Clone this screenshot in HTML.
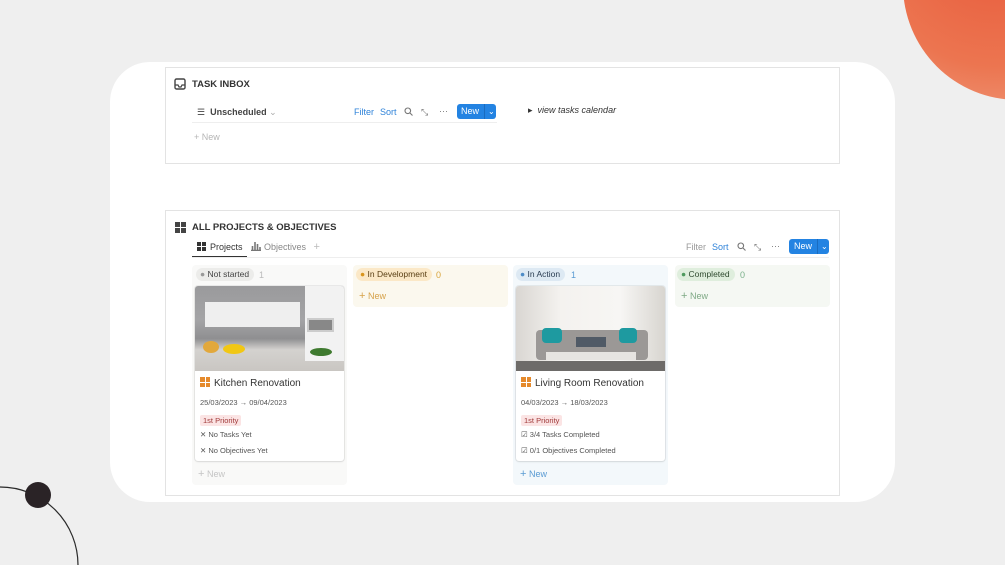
<!DOCTYPE html>
<html><head><meta charset="utf-8"><style>
*{box-sizing:border-box;margin:0;padding:0}
html,body{width:1005px;height:565px;overflow:hidden}
body{background:#efefef;position:relative;font-family:"Liberation Sans",sans-serif;color:#37352f}
.abs{position:absolute;line-height:12px;white-space:nowrap}
.panel{left:110px;top:62px;width:785px;height:440px;background:#fff;border-radius:40px}
.box{background:#fff;border:1px solid #e3e3e3}
.t{font-size:9px}
.blue{color:#2f83d9}
.btn{background:#2383e2;color:#fff;border-radius:3px;font-size:9px;height:15px;line-height:15px}
.col{border-radius:4px}
.tag{border-radius:7px;font-size:8.5px;height:13px;line-height:13px;padding:0 5px 0 4px}
.card{background:#fff;border-radius:3px;box-shadow:0 0 0 1px rgba(0,0,0,.06),0 1px 2px rgba(0,0,0,.08);overflow:hidden}
.small{font-size:7.5px;color:#555;line-height:10px}
.pr{background:#fbe4e4;color:#a03a3a;font-size:7.5px;padding:0 3px;line-height:11px;border-radius:2px;display:inline-block}
.g{display:inline-block;width:10px;height:10px;vertical-align:middle;margin-right:4px;position:relative;top:-1px;
background:linear-gradient(#fff,#fff) 4.5px 0/1px 10px no-repeat,linear-gradient(#fff,#fff) 0 4.5px/10px 1px no-repeat,#e58a2c}
</style></head><body>
<div class="abs" style="left:903px;top:-130px;width:230px;height:230px;border-radius:50%;background:radial-gradient(circle at 40% 30%,#e8583a,#ec7550 60%,#f0a285)"></div>
<svg style="position:absolute;left:0;top:480px" width="100" height="85"><circle cx="0" cy="85" r="78" fill="none" stroke="#2a2a2a" stroke-width="1.2"/><circle cx="38" cy="15" r="13" fill="#2a2326"/></svg>
<div class="abs panel"></div>

<div class="abs box" style="left:165px;top:67px;width:675px;height:97px"></div>
<svg style="position:absolute;left:174px;top:78px" width="12" height="12"><rect x="1" y="1" width="10" height="10" rx="1.5" fill="none" stroke="#444" stroke-width="1.4"/><path d="M1 7h3l1 2h2l1-2h3" fill="none" stroke="#444" stroke-width="1.2"/></svg>
<div class="abs" style="left:192px;top:79px;font-size:9.5px;font-weight:bold;color:#333">TASK INBOX</div>
<div class="abs t" style="left:197px;top:106px;color:#444">☰ &nbsp;<b>Unscheduled</b> <span style="color:#aaa">⌄</span></div>
<div class="abs t blue" style="left:354px;top:106px">Filter</div>
<div class="abs t blue" style="left:380px;top:106px">Sort</div>
<svg style="position:absolute;left:404px;top:107px" width="9" height="9"><circle cx="3.8" cy="3.8" r="2.8" fill="none" stroke="#777" stroke-width="1.1"/><path d="M6 6l2.5 2.5" stroke="#777" stroke-width="1.1"/></svg>
<div class="abs t" style="left:421px;top:106px;color:#777">⤡</div>
<div class="abs t" style="left:439px;top:105px;color:#777">···</div>
<div class="abs btn" style="left:457px;top:104px;width:39px;padding-left:4px">New <span style="position:absolute;left:27px;top:0;border-left:1px solid #1a6cc0;padding-left:3px;font-size:8px">⌄</span></div>
<div class="abs" style="left:192px;top:122px;width:305px;height:1px;background:#eee"></div>
<div class="abs t" style="left:194px;top:131px;color:#b5b5b5">+ New</div>
<div class="abs" style="left:528px;top:104px;font-size:9px;color:#333">▸ &nbsp;<i>view tasks calendar</i></div>

<div class="abs box" style="left:165px;top:210px;width:675px;height:286px"></div>
<svg style="position:absolute;left:175px;top:222px" width="11" height="11"><rect x="0" y="0" width="5" height="5" fill="#444"/><rect x="6" y="0" width="5" height="5" fill="#444"/><rect x="0" y="6" width="5" height="5" fill="#444"/><rect x="6" y="6" width="5" height="5" fill="#444"/></svg>
<div class="abs" style="left:192px;top:222px;font-size:9.5px;font-weight:bold;color:#333">ALL PROJECTS &amp; OBJECTIVES</div>
<svg style="position:absolute;left:197px;top:242px" width="9" height="9"><rect x="0" y="0" width="4" height="4" fill="#333"/><rect x="5" y="0" width="4" height="4" fill="#333"/><rect x="0" y="5" width="4" height="4" fill="#333"/><rect x="5" y="5" width="4" height="4" fill="#333"/></svg>
<div class="abs t" style="left:210px;top:241px;color:#333">Projects</div>
<div class="abs" style="left:192px;top:256px;width:55px;height:2px;background:#333"></div>
<svg style="position:absolute;left:251px;top:241px" width="10" height="10"><path d="M0 9.5h10M1.5 9V5M4 9V1M6.5 9V3M9 9V6" stroke="#777" stroke-width="1.6"/></svg>
<div class="abs t" style="left:264px;top:241px;color:#888">Objectives &nbsp;&nbsp;<span style="color:#bbb;font-size:11px">+</span></div>
<div class="abs" style="left:192px;top:257px;width:637px;height:1px;background:#eee"></div>
<div class="abs t" style="left:686px;top:241px;color:#999">Filter</div>
<div class="abs t blue" style="left:712px;top:241px">Sort</div>
<svg style="position:absolute;left:737px;top:242px" width="9" height="9"><circle cx="3.8" cy="3.8" r="2.8" fill="none" stroke="#777" stroke-width="1.1"/><path d="M6 6l2.5 2.5" stroke="#777" stroke-width="1.1"/></svg>
<div class="abs t" style="left:754px;top:241px;color:#777">⤡</div>
<div class="abs t" style="left:771px;top:240px;color:#777">···</div>
<div class="abs btn" style="left:789px;top:239px;width:40px;padding-left:5px">New <span style="position:absolute;left:28px;top:0;border-left:1px solid #1a6cc0;padding-left:3px;font-size:8px">⌄</span></div>

<div class="abs col" style="left:192px;top:265px;width:155px;height:220px;background:#f9f9f8"></div>
<div class="abs col" style="left:353px;top:265px;width:155px;height:42px;background:#fbf8ee"></div>
<div class="abs col" style="left:513px;top:265px;width:155px;height:220px;background:#f3f8fb"></div>
<div class="abs col" style="left:675px;top:265px;width:155px;height:42px;background:#f5f8f3"></div>

<div class="abs tag" style="left:196px;top:268px;background:#ececea;color:#444"><span style="color:#999">●</span> Not started</div><div class="abs t" style="left:259px;top:269px;color:#bbb">1</div>
<div class="abs tag" style="left:356px;top:268px;background:#fbe8c7;color:#5a3f14"><span style="color:#d9951e">●</span> In Development</div><div class="abs t" style="left:436px;top:269px;color:#d9a53c">0</div>
<div class="abs tag" style="left:516px;top:268px;background:#dde9f3;color:#2a3d52"><span style="color:#4e8cc7">●</span> In Action</div><div class="abs t" style="left:571px;top:269px;color:#5a9bd3">1</div>
<div class="abs tag" style="left:677px;top:268px;background:#dfeedd;color:#2f4a2f"><span style="color:#4f9a5e">●</span> Completed</div><div class="abs t" style="left:740px;top:269px;color:#7ab08a">0</div>
<div class="abs t" style="left:359px;top:290px;color:#d6a24a"><span style="font-size:11px">+</span> New</div>
<div class="abs t" style="left:681px;top:290px;color:#7ea985"><span style="font-size:11px">+</span> New</div>
<div class="abs t" style="left:198px;top:468px;color:#c5c5c5"><span style="font-size:11px">+</span> New</div>
<div class="abs t" style="left:520px;top:468px;color:#5a9bd3"><span style="font-size:11px">+</span> New</div>

<div class="abs card" style="left:195px;top:286px;width:149px;height:175px">
 <div style="height:85px;position:relative;background:linear-gradient(#9a9a9c 0,#a4a4a6 40%,#8f8f91 62%,#d4d2cf 75%,#c9c6c2 100%)">
  <div style="position:absolute;left:10px;top:16px;width:95px;height:25px;background:#efefef"></div>
  <div style="position:absolute;left:110px;top:0;width:39px;height:75px;background:#f2f2f2"></div>
  <div style="position:absolute;left:112px;top:32px;width:27px;height:14px;background:#888;border:2px solid #ccc"></div>
  <div style="position:absolute;left:28px;top:58px;width:22px;height:10px;border-radius:50%;background:#f1c714"></div>
  <div style="position:absolute;left:8px;top:55px;width:16px;height:12px;border-radius:50%;background:#e2a83c"></div>
  <div style="position:absolute;left:115px;top:62px;width:22px;height:8px;border-radius:50%;background:#3f7a2f"></div>
 </div>
 <div class="abs" style="left:5px;top:92px;font-size:10px;color:#333"><span class="g"></span>Kitchen Renovation</div>
 <div class="abs small" style="left:5px;top:112px">25/03/2023 → 09/04/2023</div>
 <div class="abs" style="left:5px;top:127px;line-height:11px"><span class="pr">1st Priority</span></div>
 <div class="abs small" style="left:5px;top:144px">✕ No Tasks Yet</div>
 <div class="abs small" style="left:5px;top:160px">✕ No Objectives Yet</div>
</div>
<div class="abs card" style="left:516px;top:286px;width:149px;height:175px">
 <div style="height:85px;position:relative;background:linear-gradient(90deg,#d9d6d2,#f4f2ef 30%,#f7f6f4 70%,#d8d5d0)">
  <div style="position:absolute;left:20px;top:44px;width:112px;height:30px;background:#9b9896;border-radius:4px"></div>
  <div style="position:absolute;left:26px;top:42px;width:20px;height:15px;background:#1e9aa0;border-radius:4px"></div>
  <div style="position:absolute;left:103px;top:42px;width:18px;height:15px;background:#1e9aa0;border-radius:4px"></div>
  <div style="position:absolute;left:60px;top:51px;width:30px;height:10px;background:#505a66"></div>
  <div style="position:absolute;left:30px;top:66px;width:90px;height:8px;background:#e6e4e1"></div>
  <div style="position:absolute;left:0;top:75px;width:149px;height:10px;background:#6d6b69"></div>
 </div>
 <div class="abs" style="left:5px;top:92px;font-size:10px;color:#333"><span class="g"></span>Living Room Renovation</div>
 <div class="abs small" style="left:5px;top:112px">04/03/2023 → 18/03/2023</div>
 <div class="abs" style="left:5px;top:127px;line-height:11px"><span class="pr">1st Priority</span></div>
 <div class="abs small" style="left:5px;top:144px">☑ 3/4 Tasks Completed</div>
 <div class="abs small" style="left:5px;top:160px">☑ 0/1 Objectives Completed</div>
</div>
</body></html>
